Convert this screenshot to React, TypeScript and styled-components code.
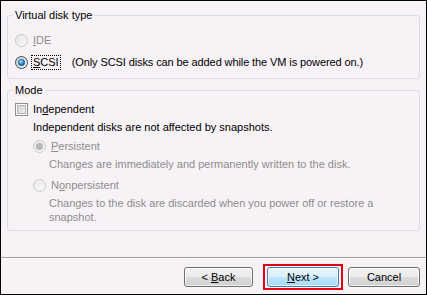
import React from 'react';
import styled, { createGlobalStyle } from 'styled-components';

const GlobalStyle = createGlobalStyle`
  html, body {
    margin: 0;
    padding: 0;
    background: #ffffff;
  }
  body {
    font-family: "Liberation Sans", Arial, sans-serif;
    font-size: 11px;
  }
`;

const Window = styled.div`
  width: 427px;
  height: 295px;
  box-sizing: border-box;
  border: 1px solid #000;
  background: #f6f2f6;
  display: flex;
  flex-direction: column;
`;

const Body = styled.div`
  flex: 1;
  display: flex;
  flex-direction: column;
  gap: 4px;
  padding: 7px 6px 0 6px;
`;

const Group = styled.fieldset<{ bottom: number }>`
  margin: 0;
  padding: 0 7px ${p => p.bottom}px 7px;
  border: 1px solid #d5dfe5;
  border-radius: 3px;
  min-width: 0;
`;

const Legend = styled.legend`
  padding: 0 2px;
  margin-left: -2px;
  line-height: 14px;
  font-size: 11px;
  color: #000;
`;

const Row = styled.label<{ disabled?: boolean; indent?: number; top?: number }>`
  display: flex;
  align-items: center;
  height: 18px;
  gap: 3px;
  margin-left: ${p => p.indent || 0}px;
  margin-top: ${p => p.top || 0}px;
  color: ${p => (p.disabled ? '#8d8d8d' : '#000')};
  white-space: nowrap;
`;

const Caption = styled.span<{ focused?: boolean }>`
  padding: 0 1px;
  border: 1px dotted ${p => (p.focused ? '#000' : 'transparent')};
  line-height: 13px;
`;

const Note = styled.span`
  margin-left: 8px;
  letter-spacing: -0.1px;
`;

const Text = styled.div<{ indent: number; top?: number; muted?: boolean }>`
  margin-left: ${p => p.indent}px;
  margin-top: ${p => p.top || 0}px;
  line-height: 14px;
  color: ${p => (p.muted ? '#8d8d8d' : '#000')};
`;

const Divider = styled.div`
  height: 1px;
  background: #a0a0a0;
  border-bottom: 1px solid #ffffff;
`;

const ButtonBar = styled.div`
  display: flex;
  align-items: center;
  justify-content: flex-end;
  padding: 5px 6px 4px 0;
`;

const Button = styled.button<{ focused?: boolean; w: number; left?: number }>`
  width: ${p => p.w}px;
  height: 20px;
  margin-left: ${p => p.left || 0}px;
  padding: 0;
  font-family: "Liberation Sans", Arial, sans-serif;
  font-size: 11px;
  color: #000;
  border-radius: 3px;
  border: 1px solid ${p => (p.focused ? '#3c7fb1' : '#707070')};
  background: ${p =>
    p.focused
      ? 'linear-gradient(#eaf6fd 0%, #d9f0fc 50%, #bee6fd 50%, #a7d9f5 100%)'
      : 'linear-gradient(#f2f2f2 0%, #ebebeb 50%, #dddddd 50%, #cfcfcf 100%)'};
  box-shadow: inset 0 0 0 1px rgba(255, 255, 255, 0.7);
`;

const Highlight = styled.span<{ left: number }>`
  display: inline-flex;
  margin-left: ${p => p.left}px;
  padding: 1px 2px;
  border: 2px solid #e3000f;
`;

const Key = styled.u`
  text-decoration: underline;
`;

const Radio: React.FC<{ checked?: boolean; disabled?: boolean }> = ({ checked, disabled }) => (
  <svg width="13" height="13" viewBox="0 0 13 13">
    <defs>
      <linearGradient id={`rf${disabled ? 'd' : 'e'}`} x1="0" y1="0" x2="1" y2="1">
        <stop offset="0" stopColor={disabled ? '#e6e6e6' : '#cbcbcb'} />
        <stop offset="1" stopColor={disabled ? '#fbfbfb' : '#f7f7f7'} />
      </linearGradient>
      <radialGradient id="rdot" cx="0.4" cy="0.35" r="0.7">
        <stop offset="0" stopColor="#a6e4fd" />
        <stop offset="0.6" stopColor="#2286cf" />
        <stop offset="1" stopColor="#0a4a8c" />
      </radialGradient>
    </defs>
    <circle
      cx="6.5"
      cy="6.5"
      r="6"
      fill={`url(#rf${disabled ? 'd' : 'e'})`}
      stroke={disabled ? '#c9c9c9' : '#3e4a57'}
    />
    {checked && (
      <circle
        cx="6.5"
        cy="6.5"
        r="3.2"
        fill={disabled ? '#b8b8b8' : 'url(#rdot)'}
        stroke={disabled ? '#a6a6a6' : '#1d4f80'}
        strokeWidth="0.6"
      />
    )}
  </svg>
);

const Checkbox: React.FC = () => (
  <svg width="13" height="13" viewBox="0 0 13 13">
    <defs>
      <linearGradient id="cbf" x1="0" y1="0" x2="1" y2="1">
        <stop offset="0" stopColor="#cbcbcb" />
        <stop offset="1" stopColor="#f6f6f6" />
      </linearGradient>
    </defs>
    <rect x="0.5" y="0.5" width="12" height="12" fill="#fff" stroke="#8f8f8f" />
    <rect x="2.5" y="2.5" width="8" height="8" fill="url(#cbf)" stroke="#b4b4b4" />
  </svg>
);

const App: React.FC = () => (
  <>
    <GlobalStyle />
    <Window>
      <Body>
        <Group bottom={7}>
          <Legend>Virtual disk type</Legend>
          <Row disabled top={9}>
            <Radio disabled />
            <Caption>
              <Key>I</Key>DE
            </Caption>
          </Row>
          <Row top={4}>
            <Radio checked />
            <Caption focused>
              <Key>S</Key>CSI
            </Caption>
            <Note>(Only SCSI disks can be added while the VM is powered on.)</Note>
          </Row>
        </Group>
        <Group bottom={6}>
          <Legend>Mode</Legend>
          <Row top={3}>
            <Checkbox />
            <Caption>
              In<Key>d</Key>ependent
            </Caption>
          </Row>
          <Text indent={18} top={2}>
            Independent disks are not affected by snapshots.
          </Text>
          <Row disabled indent={18} top={3}>
            <Radio checked disabled />
            <Caption>
              <Key>P</Key>ersistent
            </Caption>
          </Row>
          <Text indent={34} top={2} muted>
            Changes are immediately and permanently written to the disk.
          </Text>
          <Row disabled indent={18} top={5}>
            <Radio disabled />
            <Caption>
              N<Key>o</Key>npersistent
            </Caption>
          </Row>
          <Text indent={34} top={2} muted>
            Changes to the disk are discarded when you power off or restore a
            <br />
            snapshot.
          </Text>
        </Group>
      </Body>
      <Divider />
      <ButtonBar>
        <Button w={69}>
          &lt; <Key>B</Key>ack
        </Button>
        <Highlight left={10}>
          <Button w={72} focused>
            <Key>N</Key>ext &gt;
          </Button>
        </Highlight>
        <Button w={72} left={5}>
          Cancel
        </Button>
      </ButtonBar>
    </Window>
  </>
);

export default App;
